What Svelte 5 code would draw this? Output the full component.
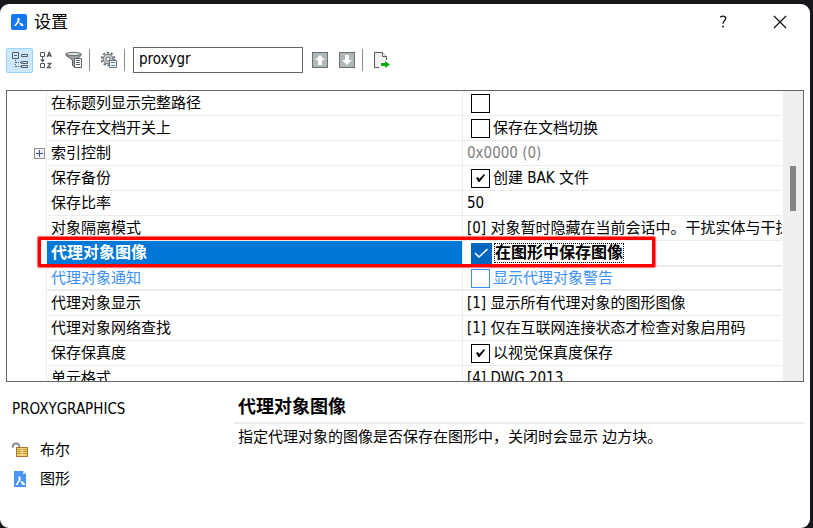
<script>
  const rows = [
    { name: '在标题列显示完整路径', check: true, on: false, value: '' },
    { name: '保存在文档开关上', check: true, on: false, value: '保存在文档切换' },
    { name: '索引控制', value: '0x0000 (0)', expandable: true, muted: true },
    { name: '保存备份', check: true, on: true, value: '创建 BAK 文件' },
    { name: '保存比率', value: '50' },
    { name: '对象隔离模式', value: '[0] 对象暂时隐藏在当前会话中。干扰实体与干扰' },
    { name: '代理对象图像', check: true, on: true, value: '在图形中保存图像', selected: true },
    { name: '代理对象通知', check: true, on: false, value: '显示代理对象警告', match: true },
    { name: '代理对象显示', value: '[1] 显示所有代理对象的图形图像' },
    { name: '代理对象网络查找', value: '[1] 仅在互联网连接状态才检查对象启用码' },
    { name: '保存保真度', check: true, on: true, value: '以视觉保真度保存' },
    { name: '单元格式', value: '[4] DWG 2013' }
  ];

  let query = $state('proxygr');
</script>

<div class="window">
  <header class="titlebar">
    <svg class="logo" width="16" height="16" viewBox="0 0 16 16">
      <rect width="16" height="16" rx="2" fill="#1677f2" />
      <path d="M6.500 4h2v3L5 12H3l3.500-5z" fill="#fff" />
      <path d="M7.500 8.500c3 0 5 1.300 5 3.500h-2.300z" fill="#fff" />
    </svg>
    <h1>设置</h1>
    <button class="win-btn" aria-label="帮助">
      <svg width="12" height="14" viewBox="0 0 12 14" fill="none" stroke="#111" stroke-width="1.3">
        <path d="M3.200 2.300C4 1.500 4.900 1.200 6 1.200c1.700 0 2.700.9 2.700 2.300 0 1.200-.7 1.800-1.400 2.400-.8.7-1.300 1.200-1.300 2.900" />
        <path d="M6 10.800v1.700" stroke-width="1.600" />
      </svg>
    </button>
    <button class="win-btn" aria-label="关闭">
      <svg width="14" height="14" viewBox="0 0 14 14" stroke="#111" stroke-width="1.2">
        <path d="M1 1l12 12M13 1L1 13" />
      </svg>
    </button>
  </header>

  <div class="toolbar">
    <button class="tool active" aria-label="分类">
      <svg width="18" height="18" viewBox="0 0 18 18" fill="none" stroke="#555c60">
        <path d="M1.500 1.500h6v6h-6zM3 4.500h3M10.500 3.500h6v2h-6zM10.500 10.500h6v2h-6zM10.500 14.500h6v2h-6z" />
        <path d="M4.500 9v7M5 11.500h5M5 15.500h5" stroke-dasharray="1 1" />
      </svg>
    </button>
    <button class="tool" aria-label="按字母排序">
      <svg width="18" height="18" viewBox="0 0 18 18" fill="none" stroke="#555c60">
        <path d="M2.500 1.500h4v4h-4zM2.500 12.500h4v4h-4zM4.500 6v3" />
        <path d="M2 8.500h5L4.500 11.500z" fill="#555c60" stroke="none" />
        <path d="M9.300 6L11 1.500h.6L13.300 6M10 4.500h2.700M9.500 12.500h3.300l-3.300 4h3.700" stroke-width="1.300" />
      </svg>
    </button>
    <button class="tool" aria-label="筛选">
      <svg width="18" height="18" viewBox="0 0 18 18" fill="none" stroke="#5b6266">
        <path d="M1 2.500h15v2L10.500 9v7.500l-3-2V9L1 4.500z" fill="#9da3a6" />
        <ellipse cx="8.500" cy="3" rx="7.300" ry="1.700" fill="#dfe2e3" />
        <path d="M9.500 7.500h7v9h-7z" fill="#fff" />
        <path d="M11 9.500h4M11 11.500h4M11 13.500h4" />
      </svg>
    </button>
    <span class="sep"></span>
    <button class="tool" aria-label="设置选项">
      <svg width="18" height="18" viewBox="0 0 18 18" fill="none" stroke="#6b7276">
        <circle cx="8" cy="8" r="6.300" stroke-width="2" stroke-dasharray="2.200 1.760" />
        <circle cx="8" cy="8" r="4.800" fill="#c9cdcf" />
        <circle cx="8" cy="8" r="2" fill="#fff" />
        <path d="M9.500 9.500h7v7h-7z" fill="#fff" />
        <path d="M11 11.500h4M11 14.500h4" stroke="#3b7fe0" />
      </svg>
    </button>
    <span class="sep"></span>
    <input class="search" type="text" aria-label="搜索" bind:value={query} />
    <button class="tool" aria-label="上一个">
      <svg width="16" height="16" viewBox="0 0 16 16">
        <rect x=".5" y=".5" width="15" height="15" fill="#b1b7b9" stroke="#687074" />
        <path d="M8 3l5 5h-3v5H6V8H3z" fill="#fff" />
      </svg>
    </button>
    <button class="tool" aria-label="下一个">
      <svg width="16" height="16" viewBox="0 0 16 16">
        <rect x=".5" y=".5" width="15" height="15" fill="#b1b7b9" stroke="#687074" />
        <path d="M8 13l5-5h-3V3H6v5H3z" fill="#fff" />
      </svg>
    </button>
    <span class="sep"></span>
    <button class="tool" aria-label="导出">
      <svg width="16" height="16" viewBox="0 0 16 16">
        <path d="M.5.5h8l4 4v11H.5z" fill="#f1f1f1" />
        <path d="M5 15.500H.5V.5h8l4 4V8" fill="none" stroke="#555c60" />
        <path d="M8.500.5v4h4" fill="#fff" stroke="#555c60" />
        <path d="M6 10h4V8l6 4.500-3 3.500H5z" fill="#fff" />
        <path d="M7 11h4V9l5 3.500-5 3.500v-2H7z" fill="#0aa80a" />
      </svg>
    </button>
  </div>

  <main class="grid">
    <div class="rows">
      <table>
        <colgroup>
          <col class="col-gutter" />
          <col class="col-name" />
          <col />
        </colgroup>
        <tbody>
          {#each rows as row, i}
            <tr class:selected={row.selected} class:match={row.match}>
              <td class="gutter">
                {#if row.expandable}
                  <button class="expand" aria-label="展开">
                    <svg width="11" height="11" viewBox="0 0 11 11">
                      <rect x=".5" y=".5" width="10" height="10" fill="#f2f2f2" stroke="#8f8f8f" />
                      <path d="M2 5.500h7M5.500 2v7" stroke="#3a55a0" />
                    </svg>
                  </button>
                {/if}
              </td>
              <th scope="row">
                {row.name}
                {#if row.selected}<span class="callout"></span>{/if}
              </th>
              <td class="value" class:muted={row.muted}>
                {#if row.check}
                  <div class="check">
                    <span class="box">
                      <input type="checkbox" id="opt-{i}" aria-label={row.name} bind:checked={row.on} />
                      {#if row.selected}
                        <svg width="15" height="15" viewBox="0 0 15 15" fill="none">
                          <path d="M1 7l4 4 8.500-8" stroke="#fff" stroke-width="1.500" />
                        </svg>
                      {:else if row.on}
                        <svg width="11" height="11" viewBox="0 0 11 11">
                          <path d="M1 5l2-1 1.200 2L9 1l1 1-5.500 7H3.500z" fill="#000" />
                        </svg>
                      {/if}
                    </span>
                    {#if row.value}<label for="opt-{i}">{row.value}</label>{/if}
                  </div>
                {:else}
                  {row.value}
                {/if}
              </td>
            </tr>
          {/each}
        </tbody>
      </table>
    </div>
    <div class="scrollbar"><div class="thumb"></div></div>
  </main>

  <footer class="details">
    <div class="meta">
      <p class="variable">PROXYGRAPHICS</p>
      <p class="tag">
        <svg width="16" height="16" viewBox="0 0 16 16">
          <path d="M1 5.500V4a3 2.600 0 0 1 6 0v2" fill="none" stroke="#74797c" stroke-width="2" />
          <path d="M1.500 5V4a2.500 2.200 0 0 1 5 0v1" fill="none" stroke="#c8ccce" stroke-width=".6" />
          <rect x="4.500" y="5.500" width="11" height="9" fill="#f0d070" stroke="#a9782a" />
          <path d="M5 7.500h10M5 9.500h10M5 11.500h10" stroke="#c99a3c" />
          <path d="M10 6v8" stroke="#fbeeb4" />
        </svg>
        布尔
      </p>
      <p class="tag">
        <svg width="16" height="16" viewBox="0 0 16 16">
          <path d="M2 0h9l3 3v13H2z" fill="#4a95f3" />
          <path d="M11 0v3h3z" fill="#cfe2fb" />
          <path d="M6.500 5.500h2v3L5.500 14h-2l3-5z" fill="#fff" />
          <path d="M8 10c3 0 5 1.500 5 4h-2.500z" fill="#fff" />
        </svg>
        图形
      </p>
    </div>
    <section class="about">
      <h2>代理对象图像</h2>
      <p>指定代理对象的图像是否保存在图形中，关闭时会显示 边方块。</p>
    </section>
  </footer>
</div>

<style>
  :global(body) {
    background: #17181c;
  }

  .window {
    display: flex;
    flex-direction: column;
    box-sizing: border-box;
    height: calc(100vh - 4px);
    margin: 4px 3px 0 0;
    padding: 0 6px;
    background: #fff;
    border-radius: 9px;
    color: #000;
    font-family: "DejaVu Sans Condensed", "Noto Sans CJK SC", sans-serif;
    font-size: 15px;
    line-height: 24px;
    overflow: hidden;
  }

  h1,
  h2,
  p {
    margin: 0;
  }

  button {
    display: flex;
    align-items: center;
    justify-content: center;
    padding: 0;
    border: 0;
    background: none;
  }

  svg {
    display: block;
    flex: none;
  }

  .titlebar {
    display: flex;
    align-items: center;
    height: 36px;
    padding-left: 5px;
    margin-right: -4px;
  }

  .titlebar h1 {
    flex: 1;
    margin-left: 7px;
    font-size: 17px;
    font-weight: 400;
  }

  .win-btn {
    width: 57px;
    height: 36px;
  }

  .toolbar {
    display: flex;
    align-items: center;
    height: 40px;
    padding-bottom: 10px;
  }

  .tool {
    box-sizing: border-box;
    width: 27px;
    height: 25px;
    border: 1px solid transparent;
    border-radius: 2px;
  }

  .tool.active {
    background: #cce8ff;
    border-color: #99d1ff;
  }

  .sep {
    width: 1px;
    height: 22px;
    margin: 0 5px 0 2px;
    background: #8c8c8c;
  }

  .search {
    box-sizing: border-box;
    width: 170px;
    height: 26px;
    margin: 0 3px;
    padding: 0 5px 2px;
    border: 1px solid #646464;
    background: #fff;
    color: #000;
    font: inherit;
    outline: none;
  }

  .grid {
    display: flex;
    flex: 1;
    min-height: 0;
    border: 1px solid #646468;
  }

  .rows {
    flex: 1;
    min-width: 0;
    margin-right: 1px;
    overflow: hidden;
  }

  table {
    width: 100%;
    table-layout: fixed;
    border-collapse: separate;
    border-spacing: 0;
  }

  .col-gutter {
    width: 40px;
  }

  .col-name {
    width: 416px;
  }

  td,
  th {
    box-sizing: border-box;
    height: 25px;
    padding: 0;
    border-bottom: 1px solid #ececec;
    font-weight: 400;
    text-align: left;
    white-space: nowrap;
  }

  .gutter {
    border-bottom: 0;
    border-right: 1px solid #ececec;
  }

  .expand {
    margin-left: 27px;
  }

  th {
    position: relative;
    padding-left: 4px;
    border-right: 1px solid #ececec;
  }

  .value {
    padding-left: 4px;
    overflow: hidden;
  }

  .muted {
    color: #808080;
  }

  .check {
    display: flex;
    align-items: center;
    gap: 3px;
    height: 24px;
    padding-left: 4px;
  }

  .check label {
    padding-bottom: 1px;
    line-height: 22px;
  }

  .box {
    display: grid;
    place-items: center;
  }

  .box > * {
    grid-area: 1 / 1;
  }

  .box svg {
    pointer-events: none;
  }

  .check input {
    appearance: none;
    box-sizing: border-box;
    width: 19px;
    height: 19px;
    margin: 0;
    border: 1px solid #000;
    background: #fff;
  }

  .selected th {
    background: #0078d7;
    color: #fff;
    font-size: 16px;
    font-weight: 700;
  }

  .selected .check input {
    width: 21px;
    height: 21px;
    border: 0;
    background: #0067c0;
  }

  .selected .check label {
    padding: 0;
    font-size: 16px;
    font-weight: 700;
    line-height: 18px;
    outline: 1px dotted #000;
  }

  .callout {
    position: absolute;
    z-index: 1;
    top: -4px;
    left: -9px;
    box-sizing: border-box;
    width: 617px;
    height: 30px;
    border: 3px solid #f00;
    border-radius: 1px;
    box-shadow: 0 0 1px 1px #f009;
    pointer-events: none;
  }

  .match th,
  .match .value {
    box-shadow: inset 0 1px #ececec, inset 0 -1px #ececec;
    color: #3b91f7;
  }

  .match .check input {
    border-color: #3b91f7;
  }

  .scrollbar {
    display: flex;
    justify-content: center;
    width: 20px;
    padding-top: 75px;
    box-sizing: border-box;
    background: #efefef;
  }

  .thumb {
    width: 6px;
    height: 45px;
    background: #858585;
  }

  .details {
    display: flex;
    min-height: 146px;
  }

  .meta {
    width: 228px;
    padding: 15px 0 0 6px;
    box-sizing: border-box;
  }

  .variable {
    margin-bottom: 14px;
  }

  .tag {
    display: flex;
    align-items: center;
    gap: 12px;
    height: 29px;
  }

  .about {
    flex: 1;
    padding-top: 13px;
  }

  .about h2 {
    padding: 0 4px 3px;
    border-bottom: 2px solid #ececec;
    font-size: 18px;
    font-weight: 700;
    line-height: 24px;
  }

  .about p {
    padding: 1px 4px;
  }
</style>
